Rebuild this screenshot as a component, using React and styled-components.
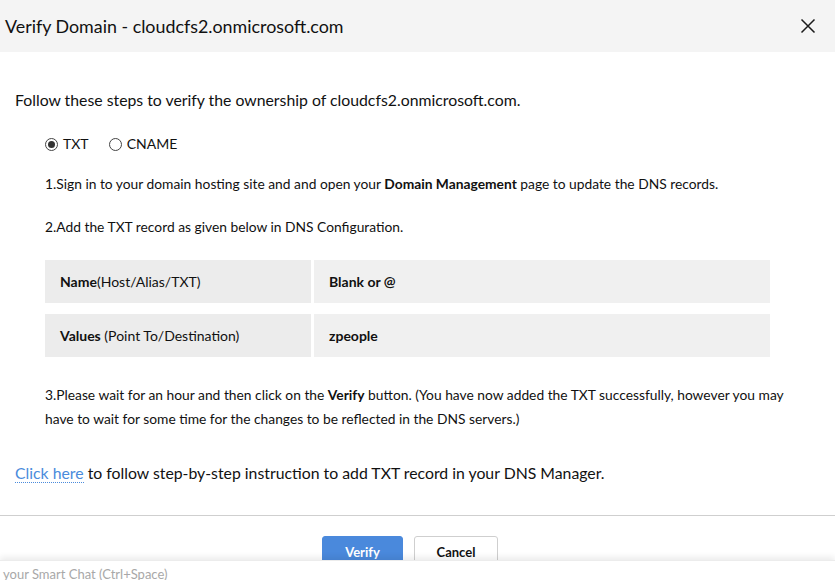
import React from "react";
import styled, { createGlobalStyle } from "styled-components";

const Global = createGlobalStyle`
  html, body { margin: 0; padding: 0; background: #fff; }
  body { font-family: Lato, "Open Sans", sans-serif; color: #111; }
  * { box-sizing: border-box; }
`;

const Dialog = styled.div`
  width: 835px;
  height: 580px;
  position: relative;
  overflow: hidden;
  background: #fff;
`;

const Header = styled.div`
  height: 52px;
  background: #f4f4f4;
  display: flex;
  align-items: center;
  justify-content: space-between;
  padding: 0 19px 0 5px;
`;

const Title = styled.h1`
  margin: 0;
  font-size: 17.85px;
  font-weight: 400;
  color: #111;
  padding-bottom: 1px;
`;

const CloseBtn = styled.button`
  border: 0;
  background: none;
  padding: 0;
  width: 16px;
  height: 16px;
  display: flex;
  cursor: pointer;
`;

const Body = styled.div`
  padding: 38px 15px 0 15px;
`;

const Intro = styled.p`
  margin: 0;
  font-size: 15.8px;
  line-height: 20px;
`;

const Indented = styled.div`
  padding-left: 30px;
  padding-right: 25px;
`;

const RadioRow = styled.div`
  display: flex;
  gap: 20px;
  margin-top: 24px;
  font-size: 14px;
  line-height: 20px;
`;

const RadioLabel = styled.label`
  display: flex;
  align-items: center;
  gap: 5px;
`;

const RadioDot = styled.span`
  width: 13px;
  height: 13px;
  border-radius: 50%;
  border: 1px solid #444;
  display: flex;
  align-items: center;
  justify-content: center;
  &::after {
    content: "";
    width: 7px;
    height: 7px;
    border-radius: 50%;
    background: ${(p) => (p.$checked ? "#333" : "transparent")};
  }
`;

const Step = styled.p`
  margin: ${(p) => p.$mt}px 0 0 0;
  font-size: 13.8px;
  line-height: ${(p) => p.$lh || 20}px;
`;

const Table = styled.div`
  margin-top: 23px;
  display: grid;
  grid-template-columns: 266px 456px;
  column-gap: 3px;
  row-gap: 11px;
`;

const Cell = styled.div`
  height: 43px;
  display: flex;
  align-items: center;
  padding-left: 15px;
  background: ${(p) => (p.$value ? "#f0f0f0" : "#ececec")};
  font-size: 14px;
  font-weight: ${(p) => (p.$value ? 700 : 400)};
  white-space: pre;
`;

const Link = styled.a`
  color: #4a8bdc;
  text-decoration: none;
  border-bottom: 1px dotted #4a8bdc;
`;

const Help = styled.p`
  margin: 32px 0 0 0;
  font-size: 15.8px;
  line-height: 20px;
`;

const Divider = styled.hr`
  margin: 32px 0 0 0;
  border: 0;
  border-top: 1px solid #cfcfcf;
`;

const Footer = styled.div`
  display: flex;
  justify-content: center;
  gap: 11px;
  padding-top: 20px;
  padding-right: 15px;
`;

const Button = styled.button`
  height: 32px;
  border-radius: 3px;
  font-family: Lato, sans-serif;
  font-size: 13px;
  font-weight: 700;
  cursor: pointer;
  width: ${(p) => p.$w}px;
  background: ${(p) => (p.$primary ? "#4a89dc" : "#fff")};
  color: ${(p) => (p.$primary ? "#fff" : "#111")};
  border: 1px solid ${(p) => (p.$primary ? "#4a89dc" : "#cfcfcf")};
  padding-bottom: 2px;
`;

const ChatBar = styled.div`
  position: absolute;
  left: 0;
  right: 0;
  bottom: 0;
  height: 20px;
  background: #fff;
  box-shadow: 0 -3px 6px rgba(0, 0, 0, 0.08);
  border-top: 1px solid #ececec;
  font-size: 13px;
  color: #a8a8a8;
  padding-left: 3px;
  line-height: 27px;
  overflow: hidden;
`;

export default function App() {
  return (
    <>
      <Global />
      <Dialog>
        <Header>
          <Title>Verify Domain - cloudcfs2.onmicrosoft.com</Title>
          <CloseBtn aria-label="Close">
            <svg width="16" height="16" viewBox="0 0 16 16">
              <path d="M1.5 1.5 L14.5 14.5 M14.5 1.5 L1.5 14.5" stroke="#1a1a1a" strokeWidth="1.5" />
            </svg>
          </CloseBtn>
        </Header>
        <Body>
          <Intro>Follow these steps to verify the ownership of cloudcfs2.onmicrosoft.com.</Intro>
          <Indented>
            <RadioRow>
              <RadioLabel>
                <RadioDot $checked />
                TXT
              </RadioLabel>
              <RadioLabel>
                <RadioDot />
                CNAME
              </RadioLabel>
            </RadioRow>
            <Step $mt={20}>
              1.Sign in to your domain hosting site and and open your <b>Domain Management</b> page to update the DNS records.
            </Step>
            <Step $mt={23}>2.Add the TXT record as given below in DNS Configuration.</Step>
            <Table>
              <Cell>
                <b>Name</b>(Host/Alias/TXT)
              </Cell>
              <Cell $value>Blank or @</Cell>
              <Cell>
                <b>Values</b> (Point To/Destination)
              </Cell>
              <Cell $value>zpeople</Cell>
            </Table>
            <Step $mt={26} $lh={24}>
              3.Please wait for an hour and then click on the <b>Verify</b> button. (You have now added the TXT successfully, however you may have to wait for some time for the changes to be reflected in the DNS servers.)
            </Step>
          </Indented>
          <Help>
            <Link href="#">Click here</Link> to follow step-by-step instruction to add TXT record in your DNS Manager.
          </Help>
        </Body>
        <Divider />
        <Footer>
          <Button $primary $w={81}>Verify</Button>
          <Button $w={84}>Cancel</Button>
        </Footer>
        <ChatBar>your Smart Chat (Ctrl+Space)</ChatBar>
      </Dialog>
    </>
  );
}
